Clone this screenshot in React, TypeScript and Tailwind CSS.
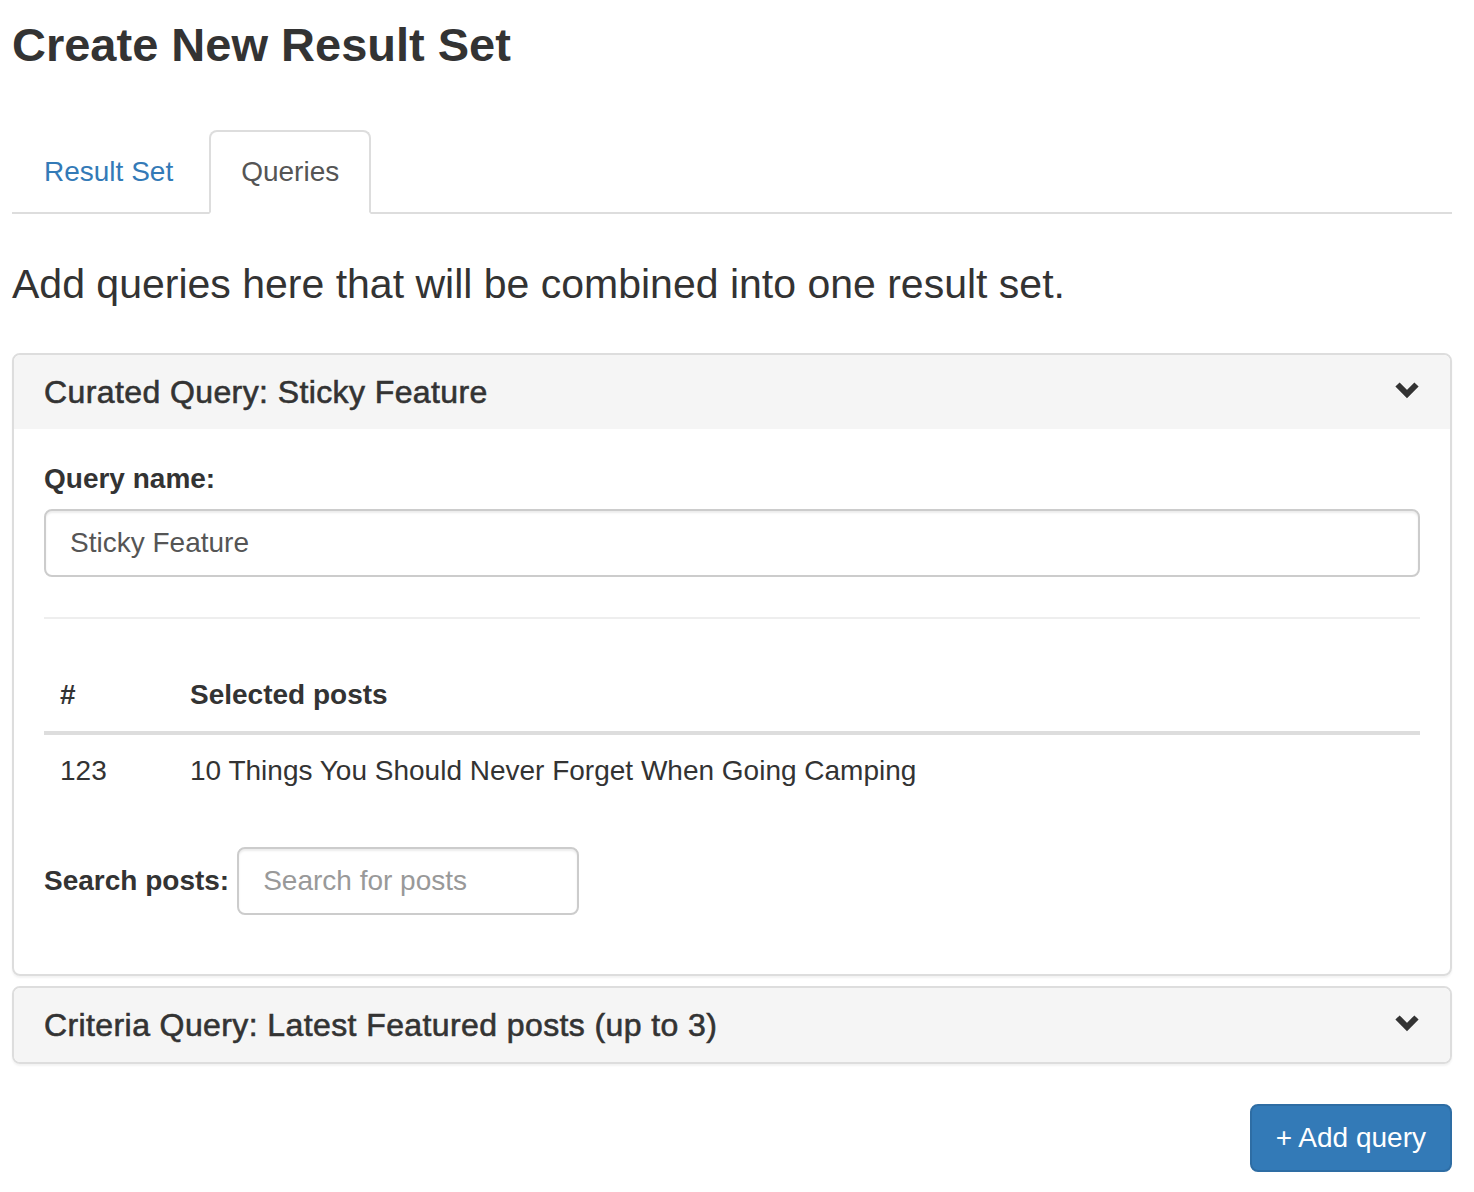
import React from "react";

const font = { fontFamily: '"Liberation Sans", Arial, Helvetica, sans-serif' };

function ChevronDown() {
	return (
		<svg width="26" height="18" viewBox="0 0 26 18" className="mt-[6px] shrink-0">
			<path
				d="M3.5 3.5L13 13L22.5 3.5"
				fill="none"
				stroke="#333"
				strokeWidth={6}
				strokeLinecap="butt"
				strokeLinejoin="miter"
			/>
		</svg>
	);
}

function PanelHeading({ title }: { title: string }) {
	return (
		<div className="flex items-start justify-between bg-[#f5f5f5] px-[30px] py-[20px]">
			<h4 className="text-[32px] leading-[34px] tracking-[0.4px] text-[#333] [-webkit-text-stroke:0.6px_#333]">
				{title}
			</h4>
			<ChevronDown />
		</div>
	);
}

export default function App() {
	return (
		<div className="min-h-screen bg-white text-[28px] leading-[40px] text-[#333]" style={font}>
			<div className="ml-[12px] w-[1440px]">
				{/* Page title */}
				<h1 className="pt-[18px] text-[47px] font-bold leading-[53px]">Create New Result Set</h1>

				{/* Tabs */}
				<ul className="mt-[59px] flex border-b-2 border-[#ddd]">
					<li className="-mb-[2px] mr-[4px]">
						<a className="block rounded-t-[8px] border-2 border-transparent px-[30px] py-[20px] text-[#337ab7]">
							Result Set
						</a>
					</li>
					<li className="-mb-[2px]">
						<a className="block rounded-t-[8px] border-2 border-[#ddd] border-b-white bg-white px-[30px] py-[20px] text-[#555]">
							Queries
						</a>
					</li>
				</ul>

				{/* Tab content */}
				<p className="mt-[41px] mb-[40px] text-[41px] font-light leading-[58px]">
					Add queries here that will be combined into one result set.
				</p>

				<div className="mb-[40px]">
					{/* Curated query panel */}
					<div className="overflow-hidden rounded-[8px] border-2 border-[#ddd] shadow-[0_2px_2px_rgba(0,0,0,0.05)]">
						<PanelHeading title="Curated Query: Sticky Feature" />
						<div className="px-[30px] pt-[30px] pb-[30px]">
							<label className="mb-[10px] block font-bold">Query name:</label>
							<input
								className="block h-[68px] w-full rounded-[8px] border-2 border-[#ccc] px-[24px] text-[28px] text-[#555] shadow-[inset_0_2px_2px_rgba(0,0,0,0.075)] outline-none"
								defaultValue="Sticky Feature"
								style={font}
							/>
							<hr className="mt-[40px] mb-[40px] border-t-2 border-[#eee]" />

							<table className="mb-[40px] w-full border-collapse">
								<thead>
									<tr className="border-b-4 border-[#ddd]">
										<th className="w-[130px] px-[16px] py-[16px] text-left font-bold">#</th>
										<th className="px-[16px] py-[16px] text-left font-bold">Selected posts</th>
									</tr>
								</thead>
								<tbody>
									<tr>
										<td className="px-[16px] py-[16px]">123</td>
										<td className="px-[16px] py-[16px]">
											10 Things You Should Never Forget When Going Camping
										</td>
									</tr>
								</tbody>
							</table>

							<div className="mb-[29px] flex items-center gap-[8px]">
								<label className="font-bold">Search posts:</label>
								<input
									className="h-[68px] w-[342px] rounded-[8px] border-2 border-[#ccc] px-[24px] text-[28px] text-[#555] shadow-[inset_0_2px_2px_rgba(0,0,0,0.075)] outline-none placeholder:text-[#999]"
									placeholder="Search for posts"
									style={font}
								/>
							</div>
						</div>
					</div>

					{/* Criteria query panel */}
					<div className="mt-[10px] overflow-hidden rounded-[8px] border-2 border-[#ddd] shadow-[0_2px_2px_rgba(0,0,0,0.05)]">
						<PanelHeading title="Criteria Query: Latest Featured posts (up to 3)" />
					</div>
				</div>

				<div className="flex justify-end">
					<button
						type="button"
						className="rounded-[8px] border-2 border-[#2e6da4] bg-[#337ab7] px-[24px] py-[12px] text-[28px] leading-[40px] text-white"
						style={font}
					>
						+ Add query
					</button>
				</div>
			</div>
		</div>
	);
}
